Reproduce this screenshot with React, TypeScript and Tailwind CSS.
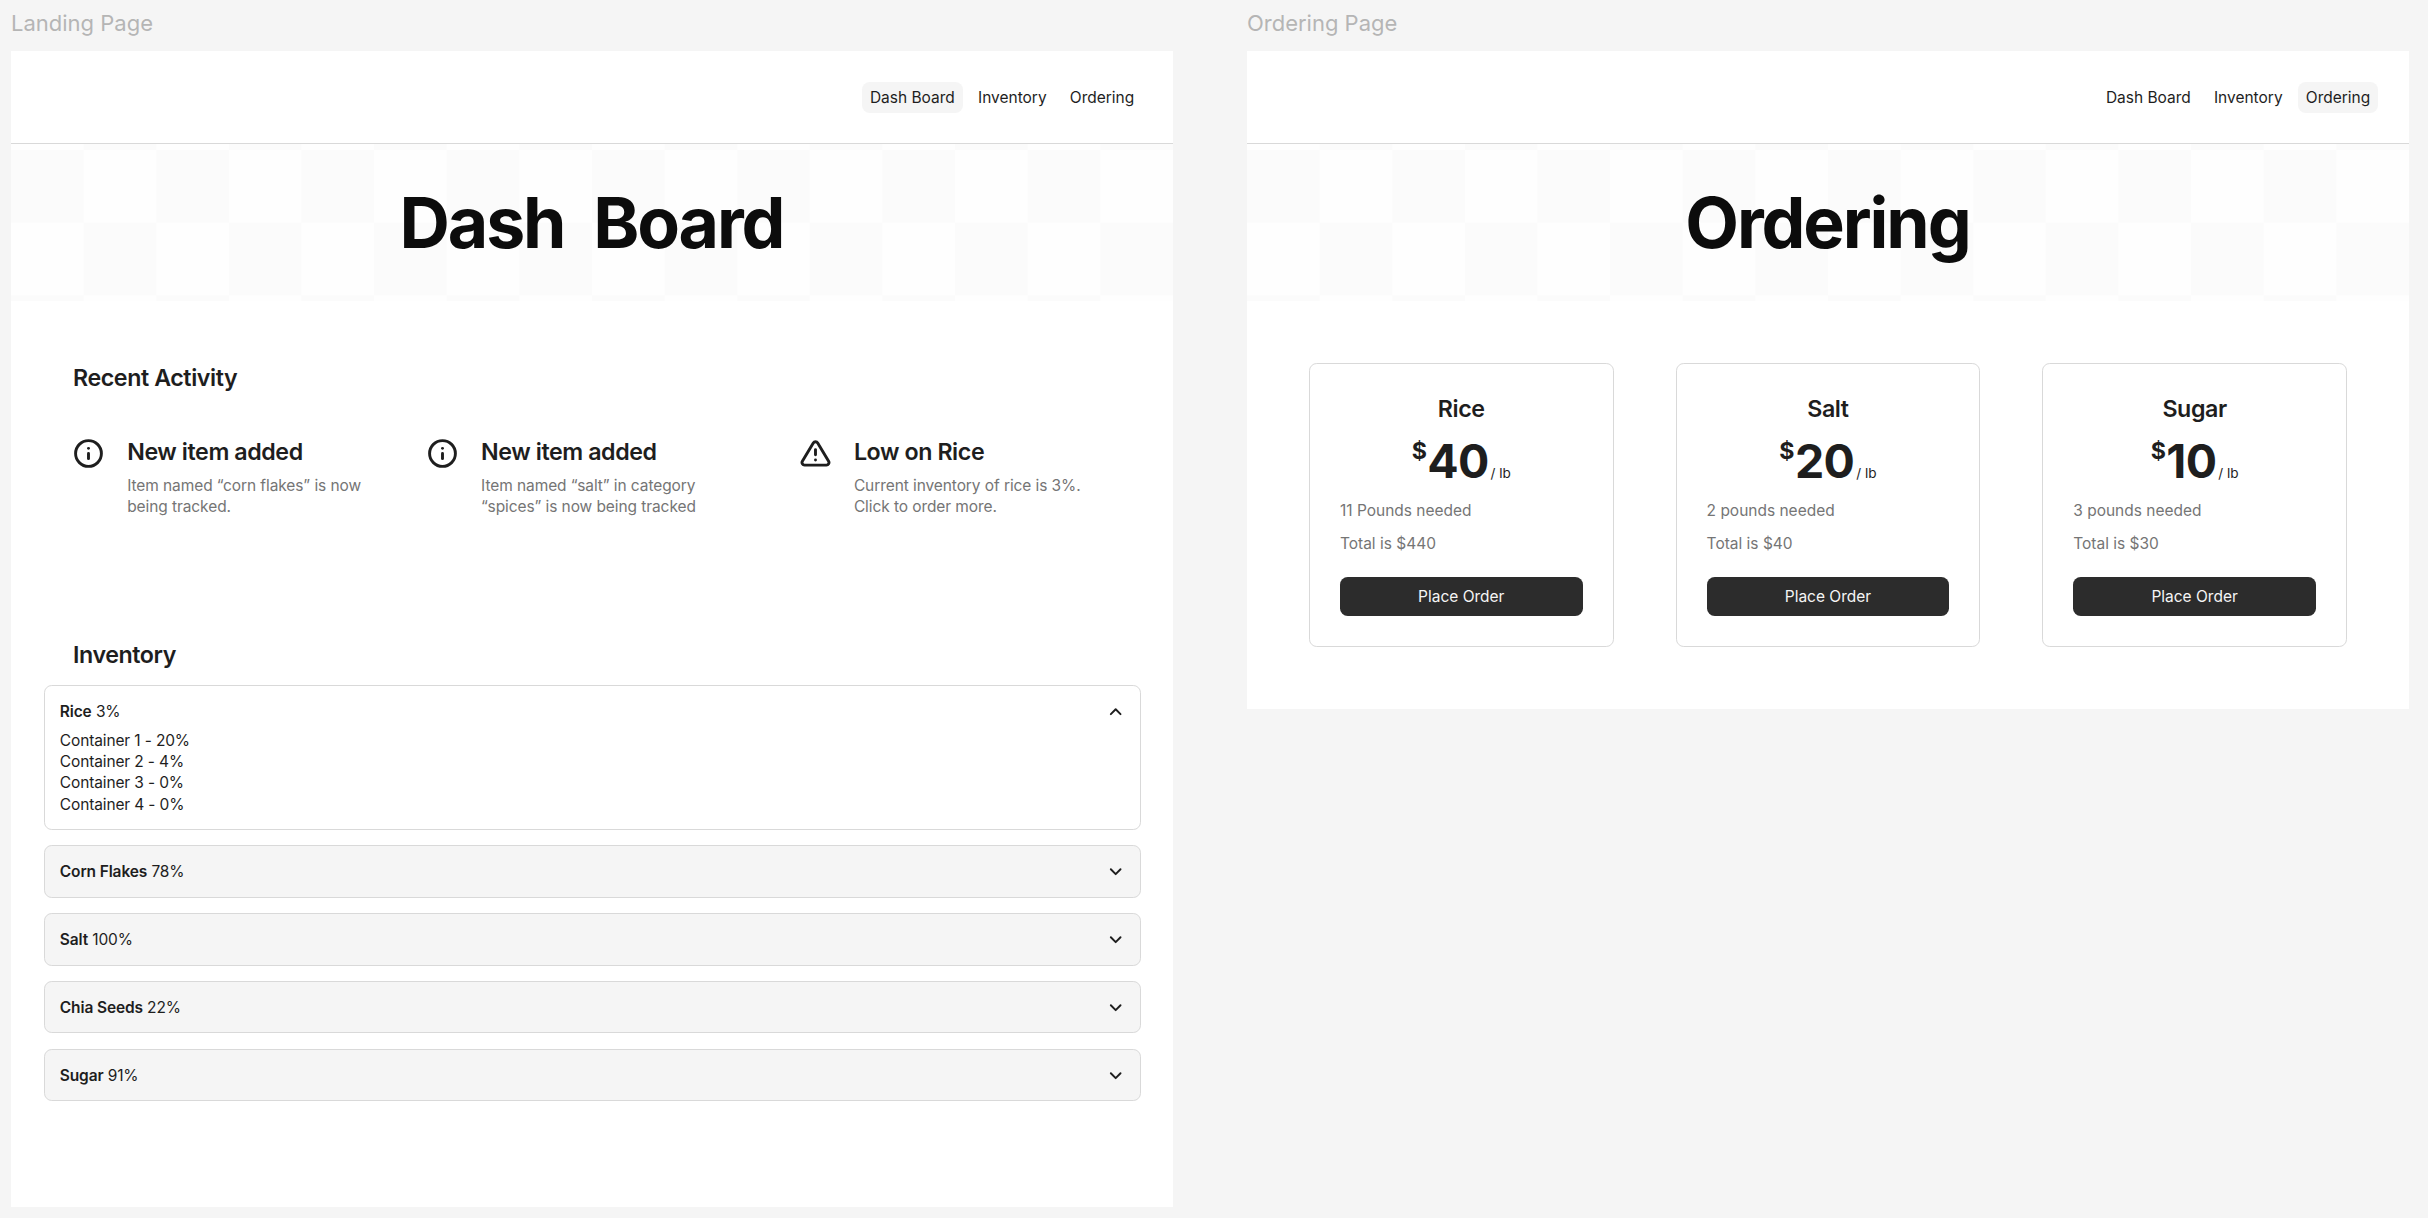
import type { ReactNode } from "react";
import { ChevronDown, ChevronUp, Info } from "lucide-react";

const NAV = ["Dash Board", "Inventory", "Ordering"];

const ROWS = [
  { name: "Corn Flakes", level: "78%" },
  { name: "Salt", level: "100%" },
  { name: "Chia Seeds", level: "22%" },
  { name: "Sugar", level: "91%" },
];

const CONTAINERS = [
  "Container 1 - 20%",
  "Container 2 - 4%",
  "Container 3 - 0%",
  "Container 4 - 0%",
];

const ORDERS = [
  { name: "Rice", price: "40", need: "11 Pounds needed", total: "Total is $440" },
  { name: "Salt", price: "20", need: "2 pounds needed", total: "Total is $40" },
  { name: "Sugar", price: "10", need: "3 pounds needed", total: "Total is $30" },
];

/** A labelled artboard; its content is laid out at 1200 units wide and scaled down. */
function Artboard({ label, className, children }: { label: string; className: string; children: ReactNode }) {
  return (
    <section>
      <div className="flex h-[50.65px] items-start pt-[9px] text-[22px] leading-[28px] text-[#b5b5b5]">
        {label}
      </div>
      <div className={`w-[1200px] bg-white [zoom:0.9683] ${className}`}>{children}</div>
    </section>
  );
}

function WarningIcon({ className }: { className?: string }) {
  return (
    <svg
      viewBox="0 0 24 24"
      fill="none"
      stroke="currentColor"
      strokeWidth={2.25}
      strokeLinecap="round"
      strokeLinejoin="round"
      className={className}
    >
      <path d="M10.29 3.86 1.82 18a2 2 0 0 0 1.71 3h16.94a2 2 0 0 0 1.71-3L13.71 3.86a2 2 0 0 0-3.42 0z" />
      <path d="M12 9v4M12 17h.01" />
    </svg>
  );
}

function Header({ active }: { active: string }) {
  return (
    <header className="flex h-24 items-center justify-end border-b border-[#d9d9d9] px-8 pt-[1.6px]">
      <nav className="flex gap-2">
        {NAV.map((item) => (
          <a
            key={item}
            className={`rounded-lg p-2 text-base leading-4 ${item === active ? "bg-[#f5f5f5]" : ""}`}
          >
            {item}
          </a>
        ))}
      </nav>
    </header>
  );
}

function Hero({ title }: { title: string }) {
  return (
    <div className="flex h-[162.4px] items-center justify-center bg-[#fefefe] bg-[conic-gradient(#fbfbfb_25%,#fefefe_0_50%,#fbfbfb_0_75%,#fefefe_0)] bg-[length:150px_150px] bg-[position:0_81.2px] pr-px">
      <h1 className="text-[72px] leading-[86px] font-bold tracking-[-0.03em] whitespace-pre text-[#0c0c0c]">
        {title}
      </h1>
    </div>
  );
}

function Activity({ icon, title, body, className }: { icon: ReactNode; title: string; body: string[]; className: string }) {
  return (
    <article className={`flex gap-6 ${className}`}>
      {icon}
      <div className="flex flex-col gap-[8.7px]">
        <h3 className="text-2xl leading-[29px] font-semibold tracking-[-0.018em]">{title}</h3>
        <p className="text-base leading-[22px] tracking-[-0.005em] whitespace-nowrap text-[#757575]">
          {body.map((line) => (
            <span key={line} className="block">
              {line}
            </span>
          ))}
        </p>
      </div>
    </article>
  );
}

function LandingPage() {
  return (
    <>
      <Header active="Dash Board" />
      <Hero title="Dash  Board" />
      <div className="flex flex-col gap-[47.8px] px-16 pt-[65px]">
        <h2 className="text-2xl leading-[29px] font-semibold tracking-[-0.018em]">Recent Activity</h2>
        <div className="flex gap-16">
          <Activity
            className="w-[301.5px]"
            icon={<Info className="size-8 shrink-0" strokeWidth={2.25} />}
            title="New item added"
            body={["Item named “corn flakes” is now", "being tracked."]}
          />
          <Activity
            className="w-[321px]"
            icon={<Info className="size-8 shrink-0" strokeWidth={2.25} />}
            title="New item added"
            body={["Item named “salt” in category", "“spices” is now being tracked"]}
          />
          <Activity
            className="flex-1"
            icon={<WarningIcon className="size-8 shrink-0" />}
            title="Low on Rice"
            body={["Current inventory of rice is 3%.", "Click to order more."]}
          />
        </div>
      </div>
      <h2 className="mt-[127.5px] px-16 text-2xl leading-[29px] font-semibold tracking-[-0.018em]">Inventory</h2>
      <div className="mt-[16.5px] ml-[34.4px] flex w-[1133px] flex-col gap-4 text-base leading-[22px] tracking-[-0.008em]">
        <div className="h-[150px] rounded-lg border border-[#d9d9d9] bg-white pt-[15.5px] pr-[15.5px] pl-[15px]">
          <div className="flex items-center justify-between">
            <p>
              <span className="font-semibold">Rice</span> 3%
            </p>
            <ChevronUp className="size-5" strokeWidth={2.4} />
          </div>
          <ul className="mt-2">
            {CONTAINERS.map((c) => (
              <li key={c}>{c}</li>
            ))}
          </ul>
        </div>
        {ROWS.map((row) => (
          <div
            key={row.name}
            className="flex h-[54px] items-center justify-between rounded-lg border border-[#d9d9d9] bg-[#f5f5f5] pt-px pr-[15.5px] pl-[15px]"
          >
            <p>
              <span className="font-semibold">{row.name}</span> {row.level}
            </p>
            <ChevronDown className="size-5" strokeWidth={2.4} />
          </div>
        ))}
      </div>
    </>
  );
}

function OrderingPage() {
  return (
    <>
      <Header active="Ordering" />
      <Hero title="Ordering" />
      <div className="grid grid-cols-3 gap-16 px-16 pt-[64.4px]">
        {ORDERS.map((o) => (
          <article key={o.name} className="flex h-[293px] flex-col rounded-lg border border-[#d9d9d9] p-[31px]">
            <h3 className="pt-[0.5px] text-center text-2xl leading-[29px] font-semibold tracking-[-0.018em]">{o.name}</h3>
            <div className="mt-4 flex h-12 justify-center font-bold">
              <span className="mr-[0.5px] text-2xl leading-[26px]">$</span>
              <span className="text-5xl leading-[48px] tracking-[-0.015em]">{o.price}</span>
              <span className="mt-[30px] ml-[2px] text-sm leading-[14px] font-normal">/ lb</span>
            </div>
            <ul className="mt-[16.3px] flex flex-col gap-3 text-base leading-[22px] text-[#757575]">
              <li>{o.need}</li>
              <li>{o.total}</li>
            </ul>
            <button className="mt-[23.2px] h-10 rounded-lg bg-[#2c2c2c] pt-px text-base leading-4 text-[#f5f5f5]">
              Place Order
            </button>
          </article>
        ))}
      </div>
    </>
  );
}

export default function App() {
  return (
    <main className="flex h-[1218px] w-[2428px] items-start gap-[74px] overflow-hidden bg-[#f5f5f5] pl-[11px] font-['Inter',sans-serif] text-[#1e1e1e]">
      <Artboard label="Landing Page" className="h-[1194px]">
        <LandingPage />
      </Artboard>
      <Artboard label="Ordering Page" className="h-[680px]">
        <OrderingPage />
      </Artboard>
    </main>
  );
}
